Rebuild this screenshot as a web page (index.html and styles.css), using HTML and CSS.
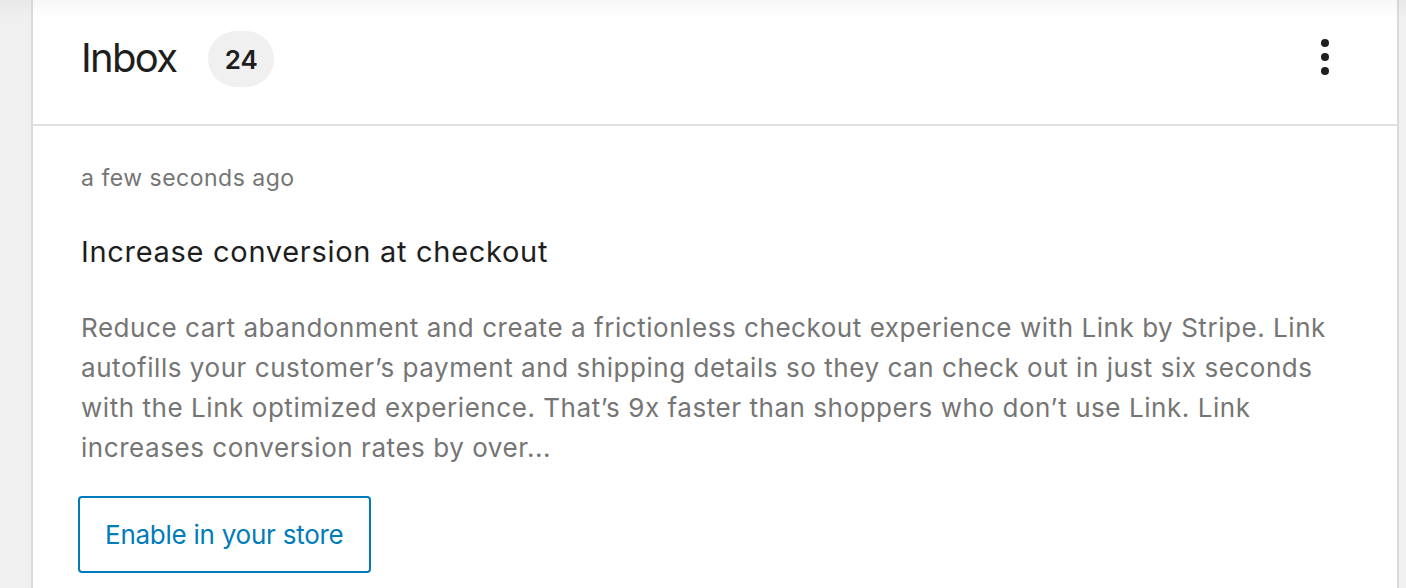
FILE: index.html
```html
<!DOCTYPE html>
<html lang="en">
<head>
    <meta charset="UTF-8">
    <title>Inbox</title>
    <link rel="stylesheet" href="styles.css">
</head>
<body>
    <div class="top-shade"></div>
    <div class="inbox-card">
        <div class="inbox-header">
            <h2 class="inbox-title">Inbox</h2>
            <span class="inbox-count">24</span>
            <button class="menu-btn" aria-label="Options">
                <span class="dot"></span>
                <span class="dot"></span>
                <span class="dot"></span>
            </button>
        </div>

        <div class="note">
            <div class="note-date">a few seconds ago</div>
            <h3 class="note-title">Increase conversion at checkout</h3>
            <p class="note-content">Reduce cart abandonment and create a frictionless checkout experience with Link by Stripe. Link autofills your customer’s payment and shipping details so they can check out in just six seconds with the Link optimized experience. That’s 9x faster than shoppers who don’t use Link. Link increases conversion rates by over...</p>
            <div class="note-actions">
                <button class="btn-secondary">Enable in your store</button>
            </div>
        </div>
    </div>
</body>
</html>
```

FILE: styles.css
```css
body {
    margin: 0;
    background: #f0f0f0;
    font-family: Inter, "Liberation Sans", sans-serif;
    color: #1e1e1e;
    overflow: hidden;
}
.top-shade {
    position: absolute;
    top: 0;
    left: 0;
    right: 0;
    height: 18px;
    background: linear-gradient(rgba(0, 0, 0, 0.035), rgba(0, 0, 0, 0));
    pointer-events: none;
}
.inbox-card {
    margin-left: 31px;
    width: 1364px;
    background: white;
    border: 2px solid #dcdcdc;
    border-top: none;
    min-height: 600px;
}
.inbox-header {
    display: flex;
    align-items: center;
    height: 114px;
    padding: 0 48px 10px 48px;
    border-bottom: 2px solid #e0e0e0;
}
.inbox-title {
    margin: 0;
    font-size: 40px;
    font-weight: 400;
    letter-spacing: -1.7px;
}
.inbox-count {
    display: flex;
    align-items: center;
    justify-content: center;
    margin-left: 32px;
    margin-top: 4px;
    width: 66px;
    height: 56px;
    border-radius: 28px;
    background: #f0f0f0;
    font-size: 26px;
    font-weight: 600;
}
.menu-btn {
    margin-left: auto;
    margin-right: 20px;
    display: flex;
    flex-direction: column;
    gap: 6px;
    padding: 0;
    border: none;
    background: none;
    cursor: pointer;
}
.dot {
    width: 8px;
    height: 8px;
    border-radius: 50%;
    background: #1e1e1e;
}
.note {
    padding: 36px 48px 0 48px;
}
.note-date {
    font-size: 23px;
    line-height: 32px;
    letter-spacing: 0.5px;
    color: #757575;
}
.note-title {
    margin: 38px 0 0 0;
    font-size: 29px;
    line-height: 40px;
    font-weight: 400;
    letter-spacing: 0.7px;
}
.note-content {
    margin: 36px 0 0 0;
    font-size: 26px;
    line-height: 40px;
    letter-spacing: 0.55px;
    color: #757575;
}
.note-actions {
    margin-top: 28px;
}
.btn-secondary {
    margin-left: -3px;
    height: 77px;
    padding: 0 25px;
    background: white;
    border: 2px solid #007cba;
    border-radius: 4px;
    color: #007cba;
    font-family: inherit;
    font-size: 26px;
    letter-spacing: -0.25px;
    cursor: pointer;
}
```
